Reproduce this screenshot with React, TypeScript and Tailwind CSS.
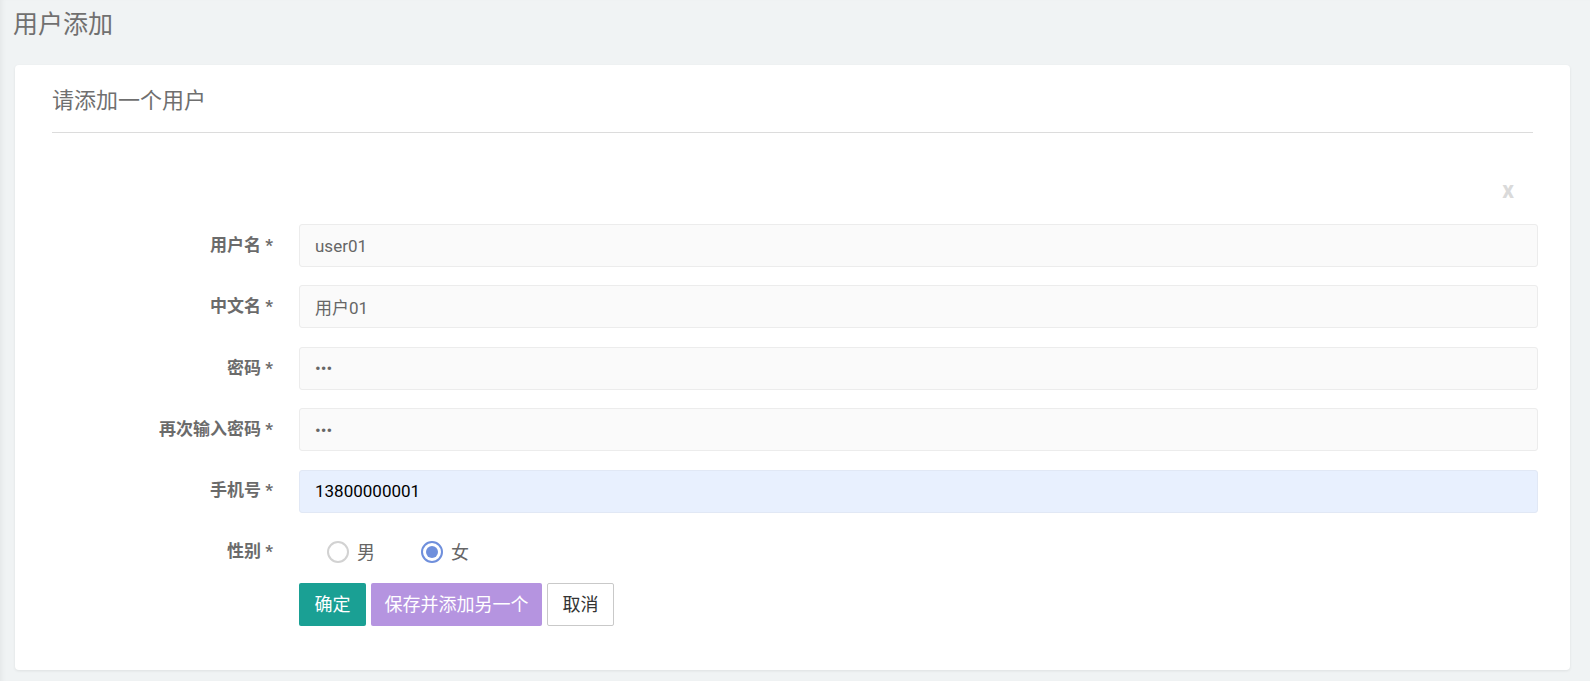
import React from 'react'

const fields = [
    { label: '用户名', value: 'user01', type: 'text' },
    { label: '中文名', value: '用户01', type: 'text' },
    { label: '密码', value: '123', type: 'password' },
    { label: '再次输入密码', value: '123', type: 'password' },
]

const App = () => {
    return (
        <div
            className="min-h-[681px] w-[1590px] bg-[#f0f3f4] pb-[11px] shadow-[inset_5px_0_5px_-3px_rgba(0,0,0,0.05)]"
            style={{ fontFamily: "Roboto, 'Noto Sans CJK SC', sans-serif" }}
        >
            <div className="pl-[13px] pt-[9px] h-[65px] text-[25px] leading-[32px] text-[#707070]">用户添加</div>

            <div className="ml-[15px] w-[1555px] bg-white rounded-[4px] shadow-[0_1px_3px_rgba(0,0,0,0.08)] px-[37px] pb-[44px]">
                <div className="pt-[21px] pb-[16px] text-[22px] leading-[30px] text-[#6f6f6f] border-b border-[#dcdcdc]">
                    请添加一个用户
                </div>

                <div className="flex justify-end pt-[45px] pr-[19px] h-[91px]">
                    <span className="text-[23px] leading-[26px] font-bold text-[#dadada]">x</span>
                </div>

                <div className="flex flex-col gap-[18.4px]">
                    {fields.map((f) => (
                        <div key={f.label} className="flex items-center">
                            <label className="w-[247px] shrink-0 pr-[26px] text-right text-[17px] font-bold text-[#6b6b6b]">
                                {f.label} *
                            </label>
                            <input
                                readOnly
                                type={f.type}
                                value={f.value}
                                className="w-[1239px] shrink-0 h-[43px] px-[15px] bg-[#fafafa] border border-[#ececec] rounded-[3px] text-[17px] text-[#666] outline-none"
                            />
                        </div>
                    ))}
                    <div className="flex items-center">
                        <label className="w-[247px] shrink-0 pr-[26px] text-right text-[17px] font-bold text-[#6b6b6b]">
                            手机号 *
                        </label>
                        <input
                            readOnly
                            value="13800000001"
                            className="w-[1239px] shrink-0 h-[43px] px-[15px] bg-[#e8f0fe] border border-[#e1e8f5] rounded-[3px] text-[17px] text-black outline-none"
                        />
                    </div>
                </div>

                <div className="flex items-center h-[43px] mt-[18px]">
                    <label className="w-[247px] shrink-0 pr-[26px] text-right text-[17px] font-bold text-[#6b6b6b]">性别 *</label>
                    <div className="flex items-center pl-[28px] gap-[46px] text-[18px] text-[#666]">
                        <div className="flex items-center gap-[8px]">
                            <span className="w-[22px] h-[22px] rounded-full border-2 border-[#d2d2d2] bg-white"></span>
                            <span>男</span>
                        </div>
                        <div className="flex items-center gap-[8px]">
                            <span className="w-[22px] h-[22px] rounded-full border-2 border-[#6f8fdc] bg-white flex items-center justify-center">
                                <span className="w-[12px] h-[12px] rounded-full bg-[#6f8fdc]"></span>
                            </span>
                            <span>女</span>
                        </div>
                    </div>
                </div>

                <div className="flex gap-[5px] mt-[9px] pl-[247px]">
                    <button className="w-[67px] h-[43px] rounded-[2px] bg-[#1aa094] text-white text-[18px]">确定</button>
                    <button className="w-[171px] h-[43px] rounded-[2px] bg-[#b594e0] text-white text-[18px]">保存并添加另一个</button>
                    <button className="w-[67px] h-[43px] rounded-[2px] bg-white border border-[#c9c9c9] text-[#333] text-[18px]">取消</button>
                </div>
            </div>
        </div>
    )
}

export default App
